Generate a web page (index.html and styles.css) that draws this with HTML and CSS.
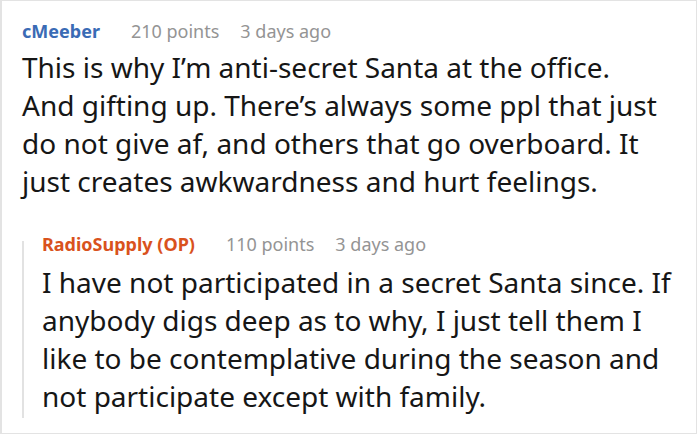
FILE: index.html
```html
<!DOCTYPE html>
<html lang="en">
<head>
<meta charset="utf-8">
<title>Comments</title>
<link rel="stylesheet" href="styles.css">
</head>
<body>
<div class="card">
  <div class="comment">
    <div class="meta">
      <span class="author author-user">cMeeber</span>
      <span class="points">210 points</span>
      <span class="date">3 days ago</span>
    </div>
    <p class="text">This is why I’m anti-secret Santa at the office. And gifting up. There’s always some ppl that just do not give af, and others that go overboard. It just creates awkwardness and hurt feelings.</p>
  </div>
  <div class="reply">
    <div class="thread-line"></div>
    <div class="comment reply-body">
      <div class="meta">
        <span class="author author-op">RadioSupply (OP)</span>
        <span class="points">110 points</span>
        <span class="date">3 days ago</span>
      </div>
      <p class="text">I have not participated in a secret Santa since. If anybody digs deep as to why, I just tell them I like to be contemplative during the season and not participate except with family.</p>
    </div>
  </div>
</div>
</body>
</html>
```
FILE: styles.css
```css
html, body {
  margin: 0;
  padding: 0;
  background: #ffffff;
}
body {
  font-family: "Noto Sans", "Open Sans", sans-serif;
  color: #161616;
}
.card {
  width: 697px;
  box-sizing: border-box;
  border: 1px solid #e3e3e3;
  border-left-width: 2px;
  padding: 18px 20px 18px 20px;
}
.meta {
  display: flex;
  align-items: baseline;
  font-size: 18px;
  line-height: 24px;
  white-space: nowrap;
}
.author {
  font-weight: 700;
  font-size: 18px;
  margin-right: 31px;
}
.author-user { color: #3a6bb5; }
.author-op { color: #d9521d; }
.points {
  color: #949494;
  margin-right: 21px;
}
.date { color: #949494; }
.text {
  margin: 5px 0 0 0;
  font-size: 28px;
  line-height: 38px;
  width: 640px;
}
.reply {
  display: flex;
  margin-top: 32px;
}
.thread-line {
  width: 2px;
  background: #e2e2e2;
  margin: 9px 0 -3px 0;
  flex: none;
}
.reply-body {
  margin-left: 18px;
}
.reply-body .text {
  margin-top: 7px;
}
```
